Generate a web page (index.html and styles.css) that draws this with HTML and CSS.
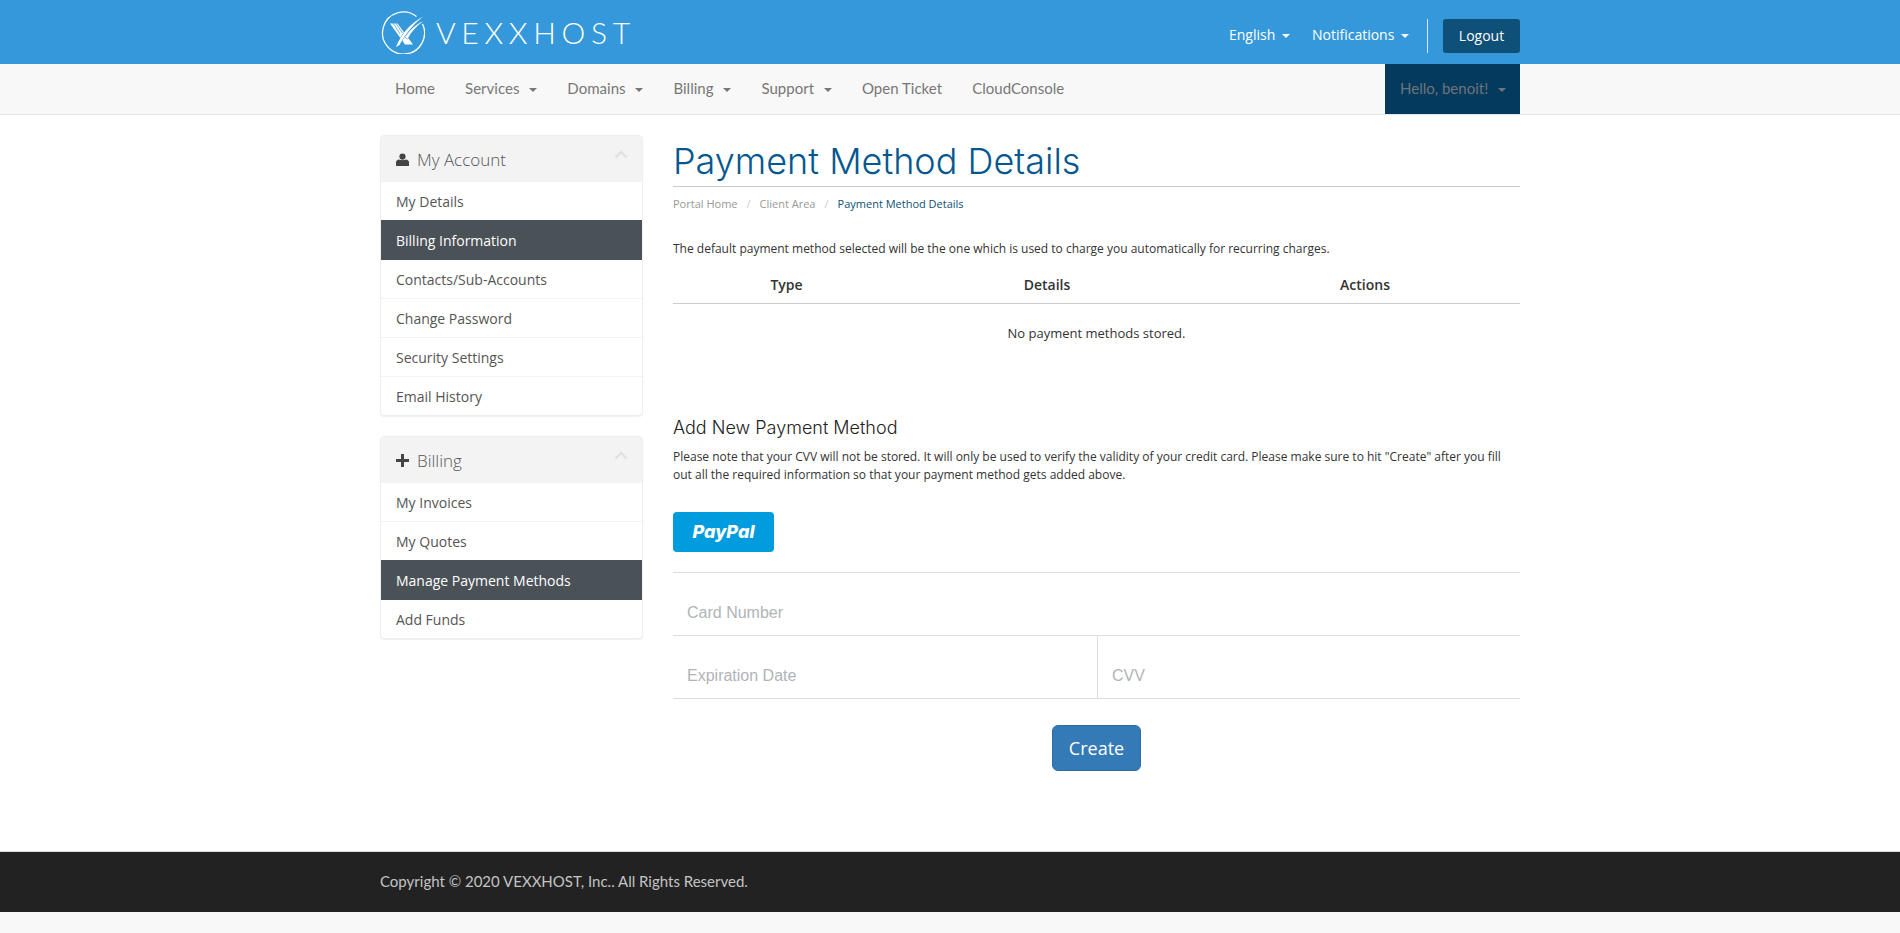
FILE: index.html
```html
<!DOCTYPE html>
<html lang="en">
<head>
<meta charset="utf-8">
<title>Payment Method Details</title>
<link rel="stylesheet" href="styles.css">
</head>
<body>
<header class="topbar">
  <div class="wrap topbar-in">
    <a class="logo" href="#">
      <svg class="logo-mark" viewBox="0 0 44 44" width="44" height="44" aria-hidden="true">
        <path d="M35.500 6.500A21 21 0 1 0 41.500 14" fill="none" stroke="#fff" stroke-width="1.300"/>
        <path d="M9 13.500h7.500L32 34.500h-8z" fill="#fff"/>
        <path d="M11.500 12L19 24M14 12L21.500 23" fill="none" stroke="#3498db" stroke-width=".7"/>
        <path d="M15 37C20 24 30 13 42 6.500C33 14 24 24 18.500 35z" fill="#fff" stroke="#3498db" stroke-width="1" paint-order="stroke"/>
        <path d="M24 27C29 20 35 14 42 11.500C35 16.500 30 22 26.500 29z" fill="#fff" stroke="#3498db" stroke-width="1" paint-order="stroke"/>
      </svg>
      <span class="logo-text">VEXXHOST</span>
    </a>
    <div class="top-links">
      <a class="lang" href="#">English <i class="caret"></i></a>
      <a class="notif" href="#">Notifications <i class="caret"></i></a>
      <span class="top-sep"></span>
      <a class="logout" href="#">Logout</a>
    </div>
  </div>
</header>
<nav class="mainnav">
  <div class="wrap mainnav-in">
    <ul class="nav-list">
      <li><a href="#">Home</a></li>
      <li><a href="#">Services <i class="caret"></i></a></li>
      <li><a href="#">Domains <i class="caret"></i></a></li>
      <li><a href="#">Billing <i class="caret"></i></a></li>
      <li><a href="#">Support <i class="caret"></i></a></li>
      <li><a href="#">Open Ticket</a></li>
      <li><a href="#">CloudConsole</a></li>
    </ul>
    <a class="hello" href="#">Hello, benoit! <i class="caret"></i></a>
  </div>
</nav>
<div class="wrap content">
  <aside class="sidebar">
    <section class="panel">
      <h3 class="panel-head">
        <svg class="panel-icon" viewBox="0 0 13 13" width="13" height="13" aria-hidden="true"><circle cx="6.500" cy="3.600" r="3.100" fill="#444"/><path d="M0 13V9.600C0 7.800 1.400 6.800 3 6.600C4 7.400 9 7.400 10 6.600C11.600 6.800 13 7.800 13 9.600V13z" fill="#444"/></svg>
        <span>My Account</span>
        <svg class="chev" viewBox="0 0 14 9" width="14" height="9" aria-hidden="true"><path d="M1.500 7.500L7 2l5.500 5.500" fill="none" stroke="#e0e0e0" stroke-width="2.400"/></svg>
      </h3>
      <a class="item" href="#">My Details</a>
      <a class="item active" href="#">Billing Information</a>
      <a class="item" href="#">Contacts/Sub-Accounts</a>
      <a class="item" href="#">Change Password</a>
      <a class="item" href="#">Security Settings</a>
      <a class="item" href="#">Email History</a>
    </section>
    <section class="panel">
      <h3 class="panel-head">
        <svg class="panel-icon" viewBox="0 0 13 13" width="13" height="13" aria-hidden="true"><path d="M5 0h3v5h5v3H8v5H5V8H0V5h5z" fill="#444"/></svg>
        <span>Billing</span>
        <svg class="chev" viewBox="0 0 14 9" width="14" height="9" aria-hidden="true"><path d="M1.500 7.500L7 2l5.500 5.500" fill="none" stroke="#e0e0e0" stroke-width="2.400"/></svg>
      </h3>
      <a class="item" href="#">My Invoices</a>
      <a class="item" href="#">My Quotes</a>
      <a class="item active" href="#">Manage Payment Methods</a>
      <a class="item" href="#">Add Funds</a>
    </section>
  </aside>
  <main class="main">
    <h1 class="page-title">Payment Method Details</h1>
    <ol class="crumbs">
      <li><a href="#">Portal Home</a></li>
      <li><a href="#">Client Area</a></li>
      <li class="current">Payment Method Details</li>
    </ol>
    <p class="lead">The default payment method selected will be the one which is used to charge you automatically for recurring charges.</p>
    <table class="methods">
      <thead>
        <tr><th class="c1">Type</th><th class="c2">Details</th><th class="c3">Actions</th></tr>
      </thead>
      <tbody>
        <tr><td colspan="3">No payment methods stored.</td></tr>
      </tbody>
    </table>
    <h2 class="add-title">Add New Payment Method</h2>
    <p class="note">Please note that your CVV will not be stored. It will only be used to verify the validity of your credit card. Please make sure to hit "Create" after you fill out all the required information so that your payment method gets added above.</p>
    <a class="paypal" href="#">PayPal</a>
    <form class="card-form">
      <input class="field" type="text" placeholder="Card Number">
      <div class="field-row">
        <input class="field" type="text" placeholder="Expiration Date">
        <input class="field" type="text" placeholder="CVV">
      </div>
      <div class="form-actions"><button class="create" type="button">Create</button></div>
    </form>
  </main>
</div>
<footer class="footer">
  <div class="wrap">Copyright © 2020 VEXXHOST, Inc.. All Rights Reserved.</div>
</footer>
<div class="foot-strip"></div>
</body>
</html>
```
FILE: styles.css
```css
* { box-sizing: border-box; }
html, body { margin: 0; padding: 0; }
body { background: #fff; font-family: "Open Sans", sans-serif; color: #333; font-size: 12px; }
a { text-decoration: none; color: inherit; }
.wrap { width: 1140px; margin: 0 auto; }
.caret { display: inline-block; width: 0; height: 0; margin-left: 3px; vertical-align: middle; border-top: 4px solid currentColor; border-left: 4px solid transparent; border-right: 4px solid transparent; }

.topbar { background: #3498db; height: 64px; }
.topbar-in { display: flex; align-items: center; justify-content: space-between; height: 64px; }
.logo { display: flex; align-items: center; color: #fff; margin-top: -1px; }
.logo-mark { display: block; margin-left: 1px; }
.logo-text { font-family: Lato, sans-serif; font-weight: 300; font-size: 30px; letter-spacing: 5.700px; margin-left: 11px; line-height: 44px; }
.top-links { display: flex; align-items: center; font-size: 14px; color: #fff; margin-top: 8px; }
.top-links a { margin-bottom: 3px; }
.top-links a.lang { margin-right: 22px; }
.top-links a.notif { margin-right: 18px; }
.top-sep { width: 1px; height: 34px; background: #d6e9f6; margin-right: 15px; }
.top-links a.logout { margin: 0; background: #0e5077; height: 34px; width: 77px; line-height: 34px; text-align: center; border-radius: 3px; }

.mainnav { background: #f8f8f8; height: 51px; border-bottom: 1px solid #e7e7e7; }
.mainnav-in { display: flex; justify-content: space-between; height: 50px; }
.nav-list { display: flex; list-style: none; margin: 0; padding: 0; font-family: Lato, sans-serif; font-size: 15px; letter-spacing: .02px; color: #777; }
.nav-list a { display: block; padding: 0 15px; line-height: 48px; }
.nav-list .caret { margin-left: 6px; }
.hello { background: #053a5f; color: #6f7478; font-family: Lato, sans-serif; font-size: 15px; line-height: 48px; width: 135px; padding-left: 15px; }
.hello .caret { margin-left: 6px; }

.content { display: flex; align-items: flex-start; gap: 30px; padding-top: 20px; }
.sidebar { width: 263px; flex: none; }
.panel { background: #fff; border: 1px solid #eee; border-radius: 4px; box-shadow: 0 1px 1px rgba(0,0,0,.06); margin-bottom: 20px; overflow: hidden; }
.panel-head { display: flex; align-items: center; height: 46px; margin: 0; padding: 1px 15px 0; background: #f3f3f3; font-family: "Open Sans", sans-serif; font-weight: 300; font-size: 17px; color: #555; }
.panel-icon { margin-right: 8px; flex: none; }
.chev { margin-left: auto; margin-top: -10px; margin-right: -1px; }
.item { display: block; height: 39px; line-height: 40px; padding: 0 15px; font-size: 14px; color: #555; border-bottom: 1px solid #f3f3f3; }
.item:last-child { border-bottom: 0; height: 38px; line-height: 39px; }
.item.active { background: #4a5157; color: #fff; border-bottom: 0; height: 40px; margin-top: -1px; line-height: 41px; }

.main { flex: 1; min-width: 0; }
.page-title { margin: 0; height: 52px; font-family: Inter, sans-serif; font-weight: 300; font-size: 36px; line-height: 52px; color: #05588f; border-bottom: 1px solid #ccc; }
.crumbs { display: flex; list-style: none; margin: 0; padding: 8px 0 0; font-size: 11px; line-height: 18px; color: #999; }
.crumbs li + li::before { content: "/"; color: #ccc; padding: 0 9px; }
.crumbs .current { color: #0e5077; }
.lead { margin: 27px 0 0; line-height: 18px; }
.methods { width: 100%; border-collapse: collapse; margin-top: 9px; font-size: 12px; }
.methods th { font-size: 14px; font-weight: 600; height: 36px; text-align: center; border-bottom: 1px solid #ccc; padding: 0; }
.c1 { width: 227px; }
.c2 { width: 294px; }
.c3 { padding-left: 16px !important; }
.methods td { text-align: center; padding: 0; height: 60px; font-size: 13px; }
.add-title { margin: 53px 0 0; font-family: Inter, sans-serif; font-weight: 300; font-size: 18px; line-height: 24px; color: #222; }
.note { margin: 8px 0 0; line-height: 18px; }
.paypal { display: block; width: 101px; height: 40px; margin-top: 28px; background: #009cde; border-radius: 4px; color: #fff; font-family: Inter, sans-serif; font-weight: 800; font-style: italic; font-size: 18px; line-height: 40px; text-align: center; }
.card-form { margin-top: 20px; border-top: 1px solid #ddd; }
.field { display: block; width: 100%; height: 63px; padding: 18px 14px 0; border: 0; border-bottom: 1px solid #ddd; font-family: "Liberation Sans", sans-serif; font-size: 16px; color: #333; background: #fff; outline: 0; }
.field::placeholder { color: #b0b4b8; opacity: 1; }
.field-row { display: flex; }
.field-row .field { flex: 1; min-width: 0; width: 50%; }
.field-row .field:first-child { flex: 0 0 424px; width: 424px; }
.field-row .field + .field { border-left: 1px solid #ddd; }
.form-actions { display: flex; justify-content: center; margin-top: 26px; }
.create { width: 89px; height: 46px; background: #337ab7; color: #fff; border: 1px solid #2e6da4; border-radius: 6px; font-family: "Open Sans", sans-serif; font-size: 18px; padding: 0; }

.footer { margin-top: 80px; background: #222; border-top: 1px solid #ddd; height: 61px; color: #c4c4c4; font-family: Lato, sans-serif; font-size: 15px; line-height: 59px; }
.foot-strip { height: 21px; background: #f8f8f8; }
```
